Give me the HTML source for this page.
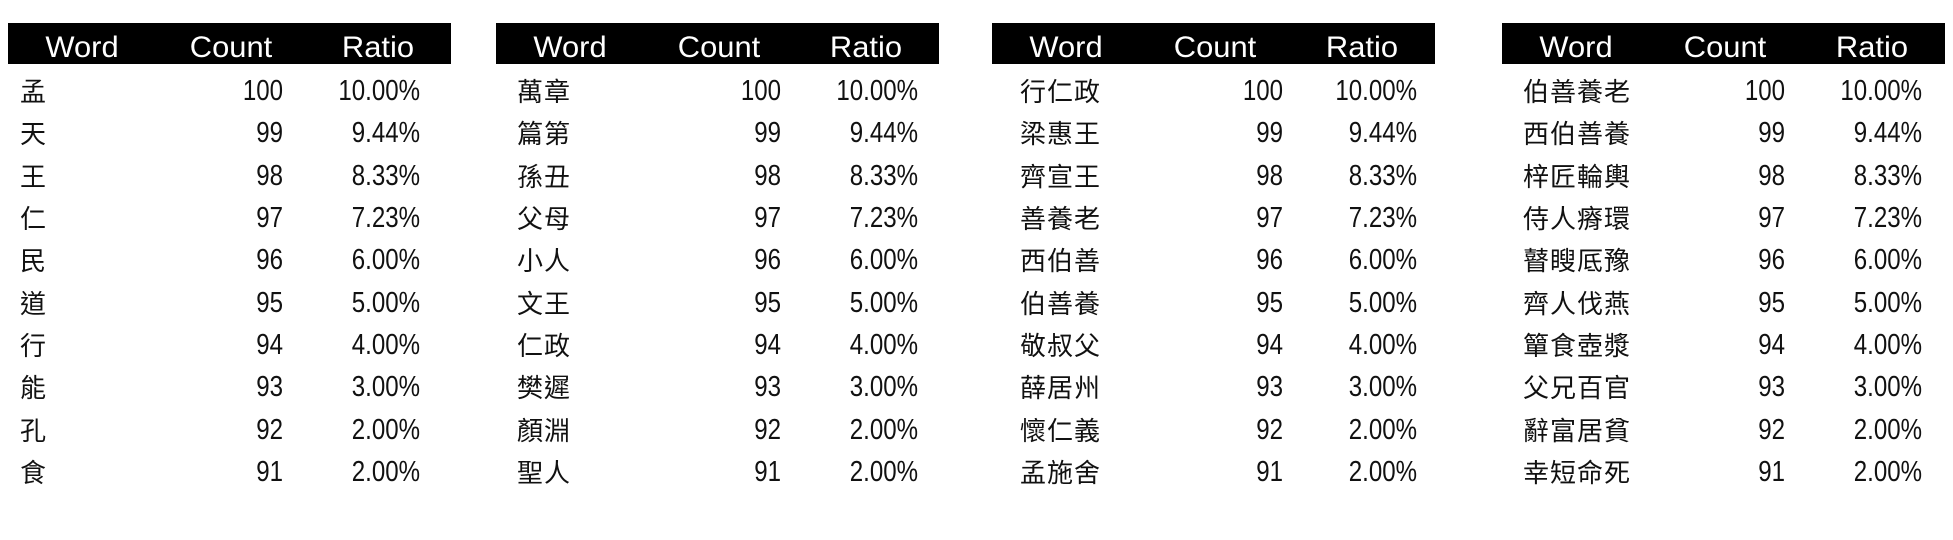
<!DOCTYPE html>
<html><head><meta charset="utf-8"><style>
body{margin:0;width:1953px;height:540px;background:#fff;position:relative;overflow:hidden;}
.t{position:absolute;top:23px;width:443px;height:500px;}
.h{position:absolute;left:0;top:0;width:443px;height:41px;background:#000;color:#fff;font:30px "Liberation Sans",sans-serif;}
.h span{position:absolute;top:4px;line-height:41px;transform:translateX(-50%) scaleX(1.03);white-space:nowrap;}
.r{position:absolute;left:0;width:443px;height:42px;color:#111;}
.w{position:absolute;top:2px;font:26px/42px "Liberation Sans","Noto Sans CJK TC",sans-serif;letter-spacing:1px;}
.n{position:absolute;top:1px;font:29px/42px "Liberation Sans",sans-serif;text-align:right;width:120px;transform:scaleX(0.83);transform-origin:right center;}
</style></head><body>
<div id="root"></div>
<script>
const data=[
["孟","天","王","仁","民","道","行","能","孔","食"],
["萬章","篇第","孫丑","父母","小人","文王","仁政","樊遲","顏淵","聖人"],
["行仁政","梁惠王","齊宣王","善養老","西伯善","伯善養","敬叔父","薛居州","懷仁義","孟施舍"],
["伯善養老","西伯善養","梓匠輪輿","侍人瘠環","瞽瞍厎豫","齊人伐燕","簞食壺漿","父兄百官","辭富居貧","幸短命死"]];
const counts=[100,99,98,97,96,95,94,93,92,91];
const ratios=["10.00%","9.44%","8.33%","7.23%","6.00%","5.00%","4.00%","3.00%","2.00%","2.00%"];
const lefts=[8,496,992,1502];
const cols=[[12,275,412],[21,285,422],[28,291,425],[21,283,420]];
let h="";
for(let t=0;t<4;t++){
 const c=cols[t];
 h+=`<div class="t" style="left:${lefts[t]}px"><div class="h"><span style="left:74px">Word</span><span style="left:223px">Count</span><span style="left:370px">Ratio</span></div>`;
 for(let i=0;i<10;i++){
  const top=46+i*42.35;
  h+=`<div class="r" style="top:${top}px"><span class="w" style="left:${c[0]}px">${data[t][i]}</span><span class="n" style="left:${c[1]-120}px">${counts[i]}</span><span class="n" style="left:${c[2]-120}px">${ratios[i]}</span></div>`;
 }
 h+=`</div>`;
}
document.getElementById("root").innerHTML=h;
</script>
</body></html>
